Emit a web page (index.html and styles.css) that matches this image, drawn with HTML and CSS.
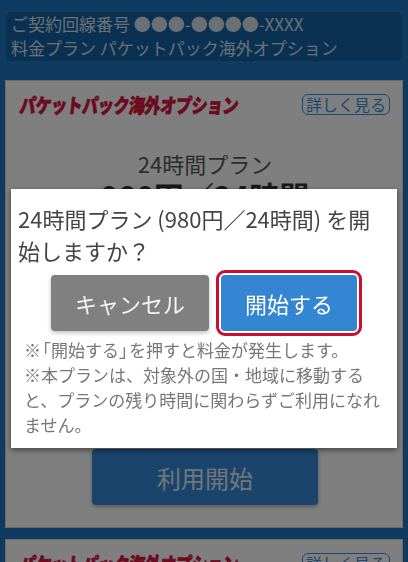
FILE: index.html
```html
<!DOCTYPE html>
<html lang="ja">
<head>
    <meta charset="UTF-8">
    <meta name="viewport" content="width=device-width, initial-scale=1.0">
    <title>パケットパック海外オプション</title>
    <link rel="stylesheet" href="styles.css">
</head>
<body>

    <!-- 回線情報 -->
    <div class="line-info">
        <p>ご契約回線番号 ●●●-●●●●-XXXX</p>
        <p>料金プラン パケットパック海外オプション</p>
    </div>

    <!-- プランカード -->
    <div class="plan-card">
        <div class="card-head">
            <span class="card-title">パケットパック海外オプション</span>
            <a class="more-link" href="#">詳しく見る</a>
        </div>
        <p class="plan-name">24時間プラン</p>
        <p class="plan-price">980円／24時間</p>
        <button class="start-btn">利用開始</button>
    </div>

    <div class="plan-card">
        <div class="card-head">
            <span class="card-title">パケットパック海外オプション</span>
            <a class="more-link" href="#">詳しく見る</a>
        </div>
        <p class="plan-name">1時間プラン</p>
    </div>

    <!-- 確認ダイアログ -->
    <div class="overlay">
        <div class="dialog">
            <p class="dialog-text">24時間プラン (980円／24時間) を開始しますか？</p>
            <div class="dialog-buttons">
                <button class="btn btn-cancel">キャンセル</button>
                <button class="btn btn-ok">開始する</button>
            </div>
            <div class="dialog-notes">
                <p>※<span class="open">「</span>開始する<span class="close">」</span>を押すと料金が発生します。</p>
                <p>※本プランは、対象外の国・地域に移動すると、プランの残り時間に関わらずご利用になれません。</p>
            </div>
        </div>
    </div>

</body>
</html>
```

FILE: styles.css
```css
* {
    box-sizing: border-box;
}
body {
    margin: 0;
    background: #1e76c0;
    font-family: "Noto Sans CJK JP", "Noto Sans", sans-serif;
    overflow: hidden;
}
p {
    margin: 0;
}
.line-info {
    margin: 12px 6px 0;
    padding: 0 5px 1px;
    background: #1662a4;
    border-radius: 5px;
    color: #d4e0ec;
    font-size: 17px;
    line-height: 24px;
}
.plan-card {
    margin: 19px 5px 0;
    padding: 12px 12px 22px 14px;
    background: #fff;
    border: 1px solid #d4d4d4;
}
.plan-card + .plan-card {
    margin-top: 11px;
}
.card-head {
    display: flex;
    justify-content: space-between;
    align-items: center;
    height: 22px;
}
.card-title {
    display: inline-block;
    color: #d81440;
    font-size: 20px;
    font-weight: 900;
    letter-spacing: -0.5px;
    white-space: nowrap;
    -webkit-text-stroke: 0.7px #d81440;
    transform: scaleX(0.8) skewX(-8deg);
    transform-origin: left center;
}
.more-link {
    padding: 0 3px;
    border: 1.5px solid #3a8ee6;
    border-radius: 6px;
    color: #3a8ee6;
    font-size: 16px;
    line-height: 19px;
    text-decoration: none;
}
.plan-name {
    margin-top: 34px;
    text-align: center;
    color: #5a5a5a;
    font-size: 22px;
    line-height: 28px;
}
.plan-price {
    text-align: center;
    color: #333;
    font-size: 30px;
    font-weight: bold;
    line-height: 36px;
}
.start-btn {
    display: block;
    width: 226px;
    height: 56px;
    margin: 236px auto 0;
    background: #3488d8;
    border: none;
    border-radius: 4px;
    box-shadow: 0 2px 4px rgba(0, 0, 0, 0.3);
    color: #e2ecf5;
    font-family: inherit;
    font-size: 24px;
}
.overlay {
    position: fixed;
    inset: 0;
    background: rgba(0, 0, 0, 0.5);
    padding: 189px 11px 0;
}
.dialog {
    background: #fff;
    padding: 13px 7px 11px;
    box-shadow: 0 2px 6px rgba(0, 0, 0, 0.5);
}
.dialog-text {
    color: #444;
    font-size: 22px;
    line-height: 32px;
}
.dialog-buttons {
    display: flex;
    justify-content: center;
    gap: 12px;
    margin-top: 9px;
}
.btn {
    height: 56px;
    border: none;
    border-radius: 4px;
    font-family: inherit;
    font-size: 22px;
}
.btn-cancel {
    width: 158px;
    background: #808080;
    color: #f4f4f4;
    box-shadow: 0 2px 4px rgba(0, 0, 0, 0.25);
}
.btn-ok {
    width: 136px;
    background: #3486d2;
    color: #fff;
    outline: 3px solid #c8102e;
    outline-offset: 2px;
}
.dialog-notes {
    margin-top: 6px;
    padding-left: 6px;
    color: #777;
    font-size: 17px;
    line-height: 25px;
}
.open {
    margin-left: -7px;
}
.close {
    margin-right: -7px;
}
```
